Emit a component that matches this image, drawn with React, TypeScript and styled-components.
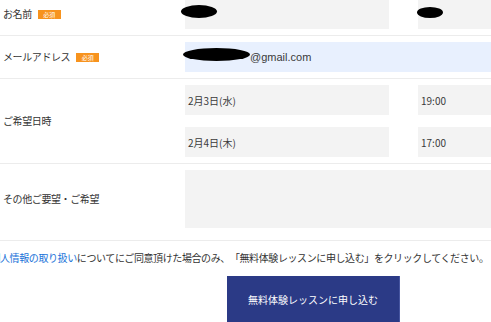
import React from "react";
import styled, { createGlobalStyle } from "styled-components";

const Global = createGlobalStyle`
  html, body { margin: 0; padding: 0; background: #fff; overflow: hidden; }
  body { font-family: "Noto Sans CJK JP", "Noto Sans", sans-serif; color: #333; }
`;

const Page = styled.div`
  width: 540px;
  margin-top: -7px;
`;

const Row = styled.div<{ $padBottom?: number }>`
  display: grid;
  grid-template-columns: 185px 1fr;
  align-items: center;
  padding: 6px 0 ${(p) => p.$padBottom ?? 6}px;
  border-bottom: 1px solid #ececec;
`;

const Label = styled.div`
  display: flex;
  align-items: center;
  gap: 6px;
  padding-left: 3px;
  font-size: 10px;
  line-height: 14px;
  letter-spacing: -0.4px;
  color: #333;
`;

const Badge = styled.span`
  display: inline-flex;
  align-items: center;
  justify-content: center;
  width: 23px;
  height: 9px;
  background: #f7931e;
  color: #fff;
  font-size: 6px;
  line-height: 9px;
  letter-spacing: 0;
`;

const Stack = styled.div`
  display: flex;
  flex-direction: column;
  gap: 12px;
`;

const Pair = styled.div`
  display: grid;
  grid-template-columns: 204px 1fr;
  column-gap: 29px;
`;

const Field = styled.div<{ $autofill?: boolean; $latin?: boolean }>`
  position: relative;
  height: 30px;
  display: flex;
  align-items: center;
  padding-left: 3px;
  background: ${(p) => (p.$autofill ? "#e8f0fe" : "#f3f3f3")};
  font-size: ${(p) => (p.$latin ? "11px" : "10px")};
  font-family: ${(p) =>
    p.$latin ? '"Liberation Sans", Arial, sans-serif' : '"Noto Sans CJK JP", sans-serif'};
  color: #3a3a3a;
`;

const TextArea = styled.div`
  height: 58px;
  background: #f3f3f3;
`;

const Redact = styled.span<{ $l: number; $t: number; $w: number; $h: number }>`
  position: absolute;
  left: ${(p) => p.$l}px;
  top: ${(p) => p.$t}px;
  width: ${(p) => p.$w}px;
  height: ${(p) => p.$h}px;
  background: #000;
  border-radius: 50%;
`;

const EmailText = styled.span`
  margin-left: 62px;
`;

const Note = styled.p`
  margin: 10px 0 0 -9.6px;
  white-space: nowrap;
  font-size: 10px;
  line-height: 14px;
  letter-spacing: -0.4px;
  text-spacing-trim: space-all;
  color: #333;
`;

const NoteLink = styled.a`
  color: #1a73d9;
  text-decoration: none;
`;

const Submit = styled.button`
  display: flex;
  align-items: center;
  justify-content: center;
  margin: 11px 0 0 227px;
  width: 173px;
  height: 46px;
  background: #2b3a86;
  border: none;
  border-right: 1px solid #4655a0;
  color: #fff;
  font-family: "Noto Sans CJK JP", sans-serif;
  font-size: 10px;
  padding: 0;
`;

export default function App() {
  return (
    <>
      <Global />
      <Page>
        <Row>
          <Label>
            お名前<Badge>必須</Badge>
          </Label>
          <Pair>
            <Field>
              <Redact $l={-4} $t={6} $w={36} $h={13} />
            </Field>
            <Field>
              <Redact $l={-1} $t={8} $w={26} $h={11} />
            </Field>
          </Pair>
        </Row>
        <Row>
          <Label>
            メールアドレス<Badge>必須</Badge>
          </Label>
          <Field $autofill $latin>
            <Redact $l={-2} $t={6} $w={67} $h={13} />
            <EmailText>@gmail.com</EmailText>
          </Field>
        </Row>
        <Row>
          <Label>ご希望日時</Label>
          <Stack>
            <Pair>
              <Field>2月3日(水)</Field>
              <Field>19:00</Field>
            </Pair>
            <Pair>
              <Field>2月4日(木)</Field>
              <Field>17:00</Field>
            </Pair>
          </Stack>
        </Row>
        <Row $padBottom={12}>
          <Label>その他ご要望・ご希望</Label>
          <TextArea />
        </Row>
        <Note>
          <NoteLink href="#">個人情報の取り扱い</NoteLink>
          についてにご同意頂けた場合のみ、「無料体験レッスンに申し込む」をクリックしてください。
        </Note>
        <Submit>無料体験レッスンに申し込む</Submit>
      </Page>
    </>
  );
}
